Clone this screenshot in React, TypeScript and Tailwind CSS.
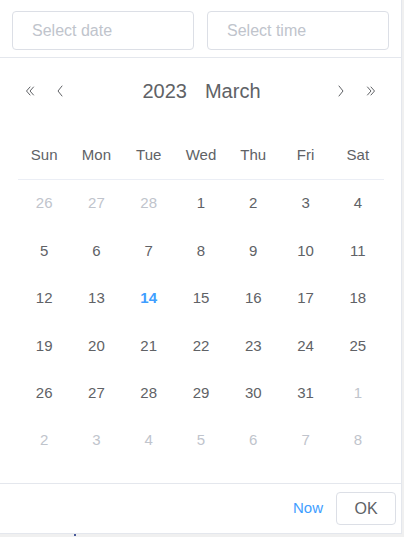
import React from 'react';

const WEEK = ['Sun', 'Mon', 'Tue', 'Wed', 'Thu', 'Fri', 'Sat'];

type Day = { n: number; muted?: boolean; today?: boolean };

function buildDays(): Day[] {
  const days: Day[] = [];
  [26, 27, 28].forEach((n) => days.push({ n, muted: true }));
  for (let n = 1; n <= 31; n++) days.push({ n, today: n === 14 });
  for (let n = 1; n <= 8; n++) days.push({ n, muted: true });
  return days;
}

function Chevron({ dir, double }: { dir: 'left' | 'right'; double?: boolean }) {
  const flip = dir === 'right' ? 'scale(-1,1) translate(-12,0)' : undefined;
  return (
    <svg width="12" height="12" viewBox="0 0 12 12" className="text-[#606266]">
      <g transform={flip} fill="none" stroke="currentColor" strokeWidth="1" strokeLinecap="round" strokeLinejoin="round">
        {double ? (
          <>
            <path d="M6 2 L2.5 6 L6 10" />
            <path d="M9.5 2 L6 6 L9.5 10" />
          </>
        ) : (
          <path d="M8 1 L4 6 L8 11" />
        )}
      </g>
    </svg>
  );
}

export default function App() {
  const days = buildDays();
  const rows = Array.from({ length: 6 }, (_, i) => days.slice(i * 7, i * 7 + 7));

  return (
    <div className="relative w-[404px] h-[537px] bg-[#f0f0f0] overflow-hidden" style={{ fontFamily: '"Liberation Sans", Arial, sans-serif' }}>
      <div className="w-[402px] h-[534px] bg-white border-r border-b border-[#e4e7ed] flex flex-col">
        <div className="h-[58px] border-b border-[#e4e7ed] flex gap-[13px] px-[12px] pt-[11px] shrink-0">
          <div className="w-[182px] h-[39px] border border-[#dcdfe6] rounded-[4px] flex items-center pl-[19px] text-[16px] text-[#c0c4cc]">
            Select date
          </div>
          <div className="w-[182px] h-[39px] border border-[#dcdfe6] rounded-[4px] flex items-center pl-[19px] text-[16px] text-[#c0c4cc]">
            Select time
          </div>
        </div>

        <div className="h-[66px] flex items-center px-[24px] shrink-0">
          <div className="flex items-center gap-[18px]">
            <Chevron dir="left" double />
            <Chevron dir="left" />
          </div>
          <div className="flex-1 flex justify-center gap-[18px] text-[20px] text-[#606266] pl-[2px]">
            <span>2023</span>
            <span>March</span>
          </div>
          <div className="flex items-center gap-[18px]">
            <Chevron dir="right" />
            <Chevron dir="right" double />
          </div>
        </div>

        <div className="px-[18px] mt-[7px] w-[402px]">
          <div className="grid grid-cols-7 h-[49px] border-b border-[#ebeef5] text-[15px] text-[#606266] items-center">
            {WEEK.map((w) => (
              <div key={w} className="text-center">{w}</div>
            ))}
          </div>
          {rows.map((row, i) => (
            <div key={i} className="grid grid-cols-7 h-[47.4px] items-center text-[15px]">
              {row.map((d, j) => (
                <div
                  key={j}
                  className={
                    'text-center ' +
                    (d.muted ? 'text-[#c0c4cc]' : d.today ? 'text-[#409eff] font-bold' : 'text-[#606266]')
                  }
                >
                  {d.n}
                </div>
              ))}
            </div>
          ))}
        </div>

        <div className="mt-auto h-[50px] border-t border-[#e4e7ed] flex items-center justify-end gap-[13px] pr-[5px]">
          <span className="text-[15px] text-[#409eff]">Now</span>
          <div className="w-[60px] h-[33px] border border-[#dcdfe6] rounded-[4px] flex items-center justify-center text-[16px] text-[#606266]">
            OK
          </div>
        </div>
      </div>
      <div className="absolute left-[74px] bottom-[1px] w-[2px] h-[2px] bg-[#4a5a9a]" />
    </div>
  );
}
